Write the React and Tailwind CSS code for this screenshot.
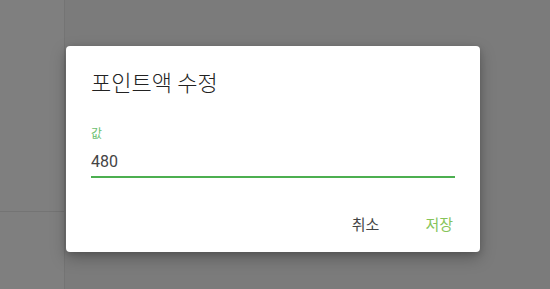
import { useState } from "react";

const font = { fontFamily: 'Roboto, "Noto Sans CJK KR", sans-serif' };

export default function App() {
  const [value, setValue] = useState("480");

  return (
    <div className="relative h-[289px] w-[550px] overflow-hidden bg-[#7b7b7b]" style={font}>
      {/* page under the backdrop */}
      <div className="flex h-full">
        <aside className="flex w-[65px] flex-col border-r border-[#747474] bg-[#7f7f7f]">
          <div className="h-[212px] border-b border-[#747474]" />
        </aside>
        <main className="flex-1" />
      </div>

      {/* dialog */}
      <div className="absolute inset-0 pl-[66px] pt-[46px]">
        <div className="flex h-[206px] w-[414px] flex-col rounded-[4px] bg-white px-[25px] shadow-[0_6px_16px_rgba(0,0,0,0.25),0_2px_6px_rgba(0,0,0,0.15)]">
          <h2 className="pt-[27px] text-[22px] leading-[22px] font-light text-[#222222]" style={font}>
            포인트액 수정
          </h2>

          <label className="mt-[33px] block text-[12px] leading-[12px] text-[#6cbf6f]">값</label>
          <input
            value={value}
            onChange={(e) => setValue(e.target.value)}
            className="mt-[12px] h-[26px] w-full border-b-2 border-[#4caf50] bg-transparent pb-[5px] text-[16px] leading-[16px] text-[#444444] outline-none"
            style={{ fontFamily: "Roboto, sans-serif" }}
          />

          <div className="mt-auto mb-[19px] flex justify-end gap-[46px] pr-[2px]">
            <button className="text-[15px] leading-[15px] text-[#444444]">취소</button>
            <button className="text-[15px] leading-[15px] text-[#86c45a]">저장</button>
          </div>
        </div>
      </div>
    </div>
  );
}
